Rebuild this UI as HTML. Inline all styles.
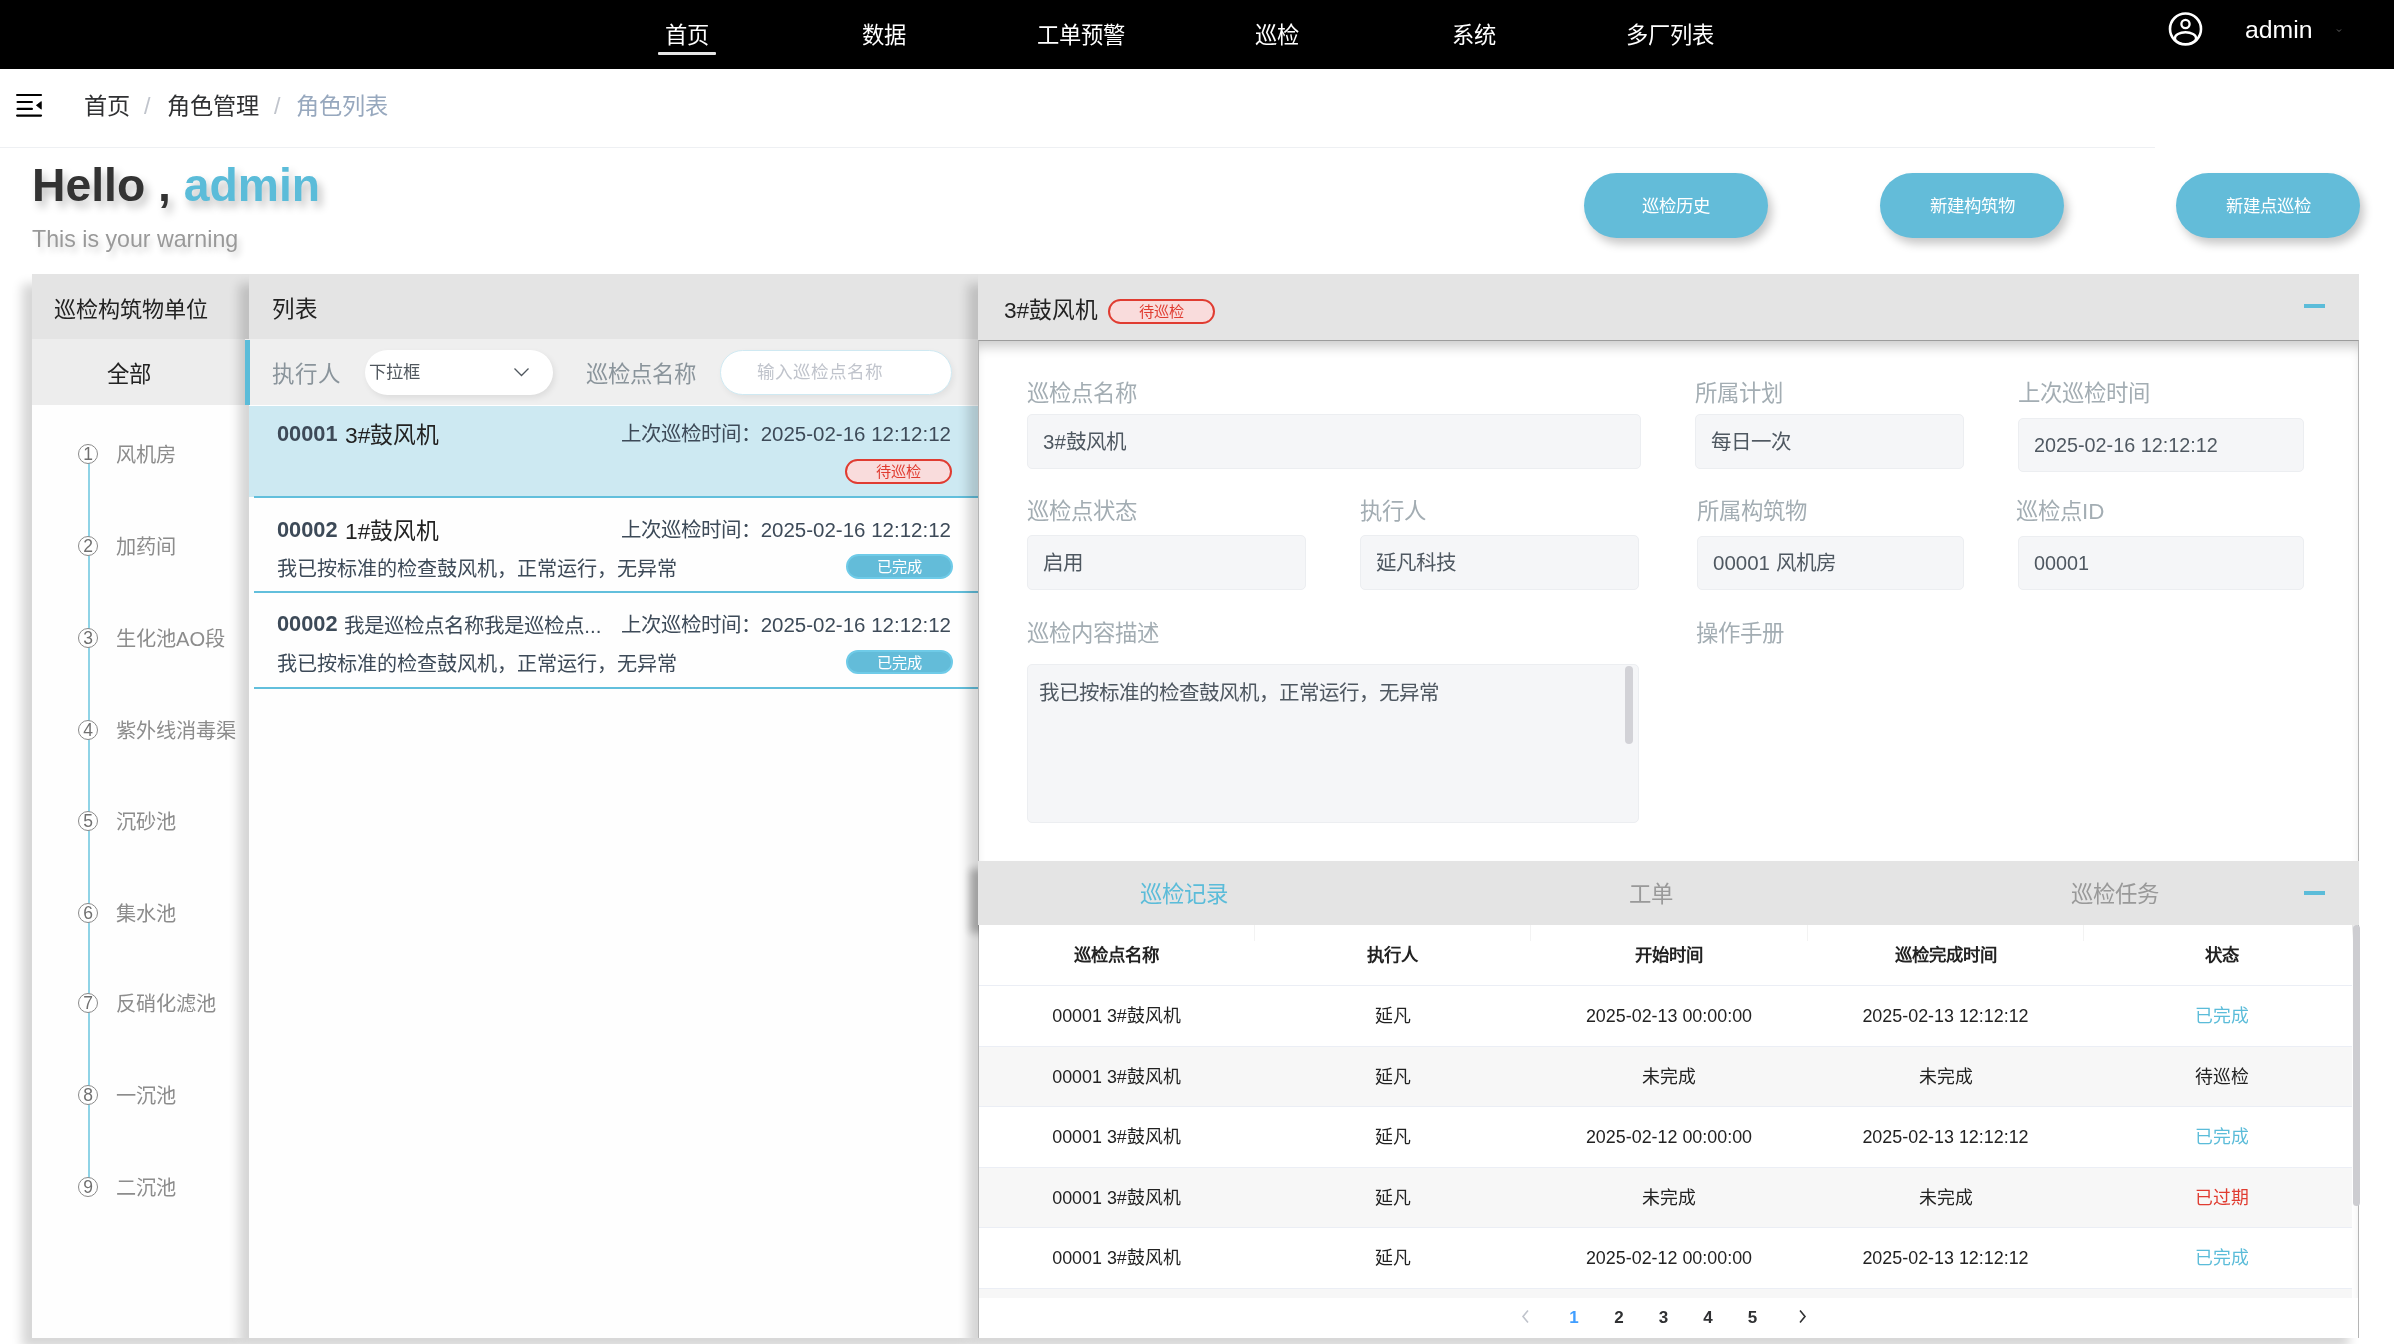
<!DOCTYPE html>
<html lang="zh-CN">
<head>
<meta charset="utf-8">
<style>
*{box-sizing:border-box;margin:0;padding:0}
html,body{width:2394px;height:1344px;overflow:hidden;background:#fff;font-family:"Liberation Sans",sans-serif;color:#303133}
.a{position:absolute;white-space:nowrap}
#nav{position:absolute;left:0;top:0;width:2394px;height:69px;background:#000}
.nv{position:absolute;top:18.5px;font-size:22.3px;line-height:34px;color:#fff;transform:translateX(-50%)}
#uline{position:absolute;left:658px;top:52px;width:58px;height:3px;background:#e6e6e6;border-radius:1px}
.bc{position:absolute;top:89px;font-size:23.2px;line-height:34px}
#sep{position:absolute;left:0;top:147px;width:2155px;height:1px;background:#eef0f3}
.hello{position:absolute;left:32px;top:152px;font-size:46.3px;line-height:66px;font-weight:bold;color:#333;text-shadow:4px 6px 8px rgba(0,0,0,.25)}
.warn{position:absolute;left:32px;top:223px;font-size:23.2px;line-height:32px;color:#999;text-shadow:3px 5px 6px rgba(0,0,0,.18)}
.btn{position:absolute;top:172.5px;width:184px;height:65.5px;border-radius:33px;background:#63bcd9;color:#fff;font-size:17.4px;line-height:67px;text-align:center;box-shadow:4px 6px 10px rgba(0,0,0,.22)}

.panel{position:absolute;top:274px;height:1064px;background:#fefefe;box-shadow:-10px 10px 10px rgba(0,0,0,.16)}
.in{position:absolute;top:-274px;width:0;height:0}
.circ{position:absolute;width:20px;height:20px;border:1px solid #8a8a8a;border-radius:50%;font-size:17.5px;line-height:19px;text-align:center;color:#707070;background:#fff;letter-spacing:0}
.badge{height:24.5px;width:107px;border-radius:13px;font-size:15.2px;line-height:21px;text-align:center}
.badge.red{background:#f9dcdc;border:2px solid #e03c31;color:#e03c31}
.badge.blue{background:#63bcd9;border:2px solid #6fcbe8;color:#fff}
.lab{font-size:22.4px;line-height:36px;color:#a3adb3}
.inp{background:#f5f6f8;border:1px solid #eceef1;border-radius:5px;font-size:20.5px;line-height:53px;padding-left:15px;color:#4f5861}
.tab{top:879px;font-size:22.4px;line-height:32px}
.th{top:942px;width:200px;text-align:center;font-size:17.4px;line-height:26px;font-weight:bold;color:#222}
.td{width:200px;text-align:center;font-size:17.9px;line-height:30px}
.pg{top:1304.5px;width:40px;text-align:center;font-size:17px;line-height:26px;font-weight:bold}

</style>
</head>
<body>
<div id="root" style="position:absolute;left:0;top:0;width:2394px;height:1344px;overflow:hidden;will-change:transform">
<div id="nav">
  <div class="nv" style="left:687px">首页</div>
  <div class="nv" style="left:884px">数据</div>
  <div class="nv" style="left:1081px">工单预警</div>
  <div class="nv" style="left:1277px">巡检</div>
  <div class="nv" style="left:1474px">系统</div>
  <div class="nv" style="left:1670px">多厂列表</div>
  <div id="uline"></div>
  <svg class="a" style="left:2167px;top:11px" width="37" height="37" viewBox="0 0 37 37">
    <defs><clipPath id="cc"><circle cx="18.5" cy="18" r="15.5"/></clipPath></defs>
    <circle cx="18.5" cy="18" r="15.5" fill="none" stroke="#fff" stroke-width="2.6"/>
    <circle cx="18.5" cy="13" r="4.1" fill="none" stroke="#fff" stroke-width="2.3"/>
    <ellipse cx="18.5" cy="27.2" rx="10.6" ry="6" fill="none" stroke="#fff" stroke-width="2.4" clip-path="url(#cc)"/>
  </svg>
  <div class="a" style="left:2245px;top:13px;font-size:24.8px;line-height:34px;color:#fff">admin</div>
  <svg class="a" style="left:2336px;top:28px" width="6" height="5" viewBox="0 0 6 5"><path d="M1 1.5 L3 3.5 L5 1.5" fill="none" stroke="#666" stroke-width="1"/></svg>
</div>

<!-- breadcrumb -->
<svg class="a" style="left:10px;top:85px" width="40" height="40" viewBox="0 0 40 40">
  <g stroke="#000" stroke-width="2.2" stroke-linecap="round" fill="none">
    <path d="M7.1 10 H31"/><path d="M7.6 17 H21.9"/><path d="M7.6 23.9 H21.9"/><path d="M7.1 30.6 H31"/>
  </g>
  <path d="M31.3 16.6 L31.3 24.2 L26.4 20.3 Z" fill="#000" stroke="#000" stroke-width="0.8" stroke-linejoin="round"/>
</svg>
<div class="bc" style="left:84px;color:#303133">首页</div>
<div class="bc" style="left:144px;color:#c0c4cc">/</div>
<div class="bc" style="left:167px;color:#303133">角色管理</div>
<div class="bc" style="left:274px;color:#c0c4cc">/</div>
<div class="bc" style="left:296px;color:#97a8be">角色列表</div>
<div id="sep"></div>

<div class="hello">Hello , <span style="color:#5bbcd9">admin</span></div>
<div class="warn">This is your warning</div>

<div class="btn" style="left:1584px">巡检历史</div>
<div class="btn" style="left:1880px">新建构筑物</div>
<div class="btn" style="left:2176px">新建点巡检</div>


<!-- LEFT PANEL -->
<div class="panel" id="pl" style="left:32px;width:217px;z-index:1">
 <div class="in" style="left:-32px">
  <div class="a" style="left:32px;top:274px;width:217px;height:65px;background:#e4e4e4"></div>
  <div class="a" style="left:54px;top:293px;font-size:22.1px;line-height:34px;color:#222">巡检构筑物单位</div>
  <div class="a" style="left:32px;top:339px;width:217px;height:66px;background:#ededed"></div>
  <div class="a" style="left:107px;top:358px;font-size:22.4px;line-height:34px;color:#222">全部</div>
  <div class="a" style="left:88px;top:463px;width:2px;height:733px;background:#8fd3e6"></div>
    <div class="circ" style="left:78px;top:443.7px">1</div>
  <div class="a" style="left:116px;top:440.7px;font-size:20.2px;line-height:28px;color:#8c8c8c">风机房</div>
  <div class="circ" style="left:78px;top:535.9px">2</div>
  <div class="a" style="left:116px;top:532.9px;font-size:20.2px;line-height:28px;color:#8c8c8c">加药间</div>
  <div class="circ" style="left:78px;top:627.9px">3</div>
  <div class="a" style="left:116px;top:624.9px;font-size:20.2px;line-height:28px;color:#8c8c8c">生化池AO段</div>
  <div class="circ" style="left:78px;top:719.5px">4</div>
  <div class="a" style="left:116px;top:716.5px;font-size:20.2px;line-height:28px;color:#8c8c8c">紫外线消毒渠</div>
  <div class="circ" style="left:78px;top:810.5px">5</div>
  <div class="a" style="left:116px;top:807.5px;font-size:20.2px;line-height:28px;color:#8c8c8c">沉砂池</div>
  <div class="circ" style="left:78px;top:902.5px">6</div>
  <div class="a" style="left:116px;top:899.5px;font-size:20.2px;line-height:28px;color:#8c8c8c">集水池</div>
  <div class="circ" style="left:78px;top:992.5px">7</div>
  <div class="a" style="left:116px;top:989.5px;font-size:20.2px;line-height:28px;color:#8c8c8c">反硝化滤池</div>
  <div class="circ" style="left:78px;top:1084.5px">8</div>
  <div class="a" style="left:116px;top:1081.5px;font-size:20.2px;line-height:28px;color:#8c8c8c">一沉池</div>
  <div class="circ" style="left:78px;top:1176.5px">9</div>
  <div class="a" style="left:116px;top:1173.5px;font-size:20.2px;line-height:28px;color:#8c8c8c">二沉池</div>

 </div>
</div>

<!-- MIDDLE PANEL -->
<div class="panel" id="pm" style="left:249px;width:729px;z-index:2">
 <div class="in" style="left:-249px">
  <div class="a" style="left:249px;top:274px;width:729px;height:65px;background:#e4e4e4"></div>
  <div class="a" style="left:272px;top:293px;font-size:22.5px;line-height:34px;color:#222">列表</div>
  <div class="a" style="left:245px;top:339px;width:733px;height:66px;background:#efefef"></div>
  <div class="a" style="left:245px;top:340px;width:5px;height:65px;background:#5bbcd9"></div>
  <div class="a" style="left:272px;top:358px;font-size:22.5px;line-height:34px;color:#8a949b">执行人</div>
  <div class="a" style="left:365px;top:350px;width:188px;height:45px;border-radius:23px;background:#fff;box-shadow:2px 3px 6px rgba(0,0,0,.08)"></div>
  <div class="a" style="left:369px;top:359px;font-size:17.3px;line-height:26px;color:#50575e">下拉框</div>
  <svg class="a" style="left:513px;top:367px" width="17" height="11" viewBox="0 0 17 11"><path d="M1.5 1.5 L8.5 8.5 L15.5 1.5" fill="none" stroke="#50575e" stroke-width="1.3"/></svg>
  <div class="a" style="left:586px;top:358px;font-size:22.4px;line-height:34px;color:#8a949b">巡检点名称</div>
  <div class="a" style="left:720px;top:350px;width:232px;height:45px;border-radius:23px;background:#fff;border:1px solid #cfe9f2;box-shadow:2px 3px 6px rgba(0,0,0,.06)"></div>
  <div class="a" style="left:757px;top:359px;font-size:17.6px;line-height:26px;color:#c0c4cc">输入巡检点名称</div>

  <div class="a" style="left:249px;top:405px;width:729px;height:92px;background:#cde9f2;border-top:1px solid #fff"></div>
  <div class="a" style="left:254px;top:496px;width:724px;height:1.6px;background:#62bfdc"></div>
  <div class="a" style="left:254px;top:591px;width:724px;height:1.6px;background:#62bfdc"></div>
  <div class="a" style="left:254px;top:687px;width:724px;height:1.6px;background:#62bfdc"></div>

  
  <div class="a" style="left:277px;top:420px;font-size:22.8px;line-height:30px;color:#222"><b style="color:#3d4a58;font-size:21.8px;margin-right:1px;position:relative;top:-2px">00001</b> 3#鼓风机</div>
  <div class="a" style="left:620px;top:419.5px;font-size:20.5px;line-height:28px;color:#3d4a58;width:331px;text-align:right">上次巡检时间：2025-02-16 12:12:12</div>
  <div class="a badge red" style="left:845px;top:459px">待巡检</div>

  <div class="a" style="left:277px;top:516px;font-size:22.8px;line-height:30px;color:#222"><b style="color:#3d4a58;font-size:21.8px;margin-right:1px;position:relative;top:-2px">00002</b> 1#鼓风机</div>
  <div class="a" style="left:620px;top:515.5px;font-size:20.5px;line-height:28px;color:#3d4a58;width:331px;text-align:right">上次巡检时间：2025-02-16 12:12:12</div>
  <div class="a" style="left:277px;top:554.5px;font-size:20.1px;line-height:28px;color:#3d4a58">我已按标准的检查鼓风机，正常运行，无异常</div>
  <div class="a badge blue" style="left:846px;top:554px">已完成</div>

  <div class="a" style="left:277px;top:611px;font-size:20.5px;line-height:30px;color:#3d4a58"><b style="font-size:21.8px;margin-right:1px;position:relative;top:-2px">00002</b> 我是巡检点名称我是巡检点...</div>
  <div class="a" style="left:620px;top:610.5px;font-size:20.5px;line-height:28px;color:#3d4a58;width:331px;text-align:right">上次巡检时间：2025-02-16 12:12:12</div>
  <div class="a" style="left:277px;top:649.5px;font-size:20.1px;line-height:28px;color:#3d4a58">我已按标准的检查鼓风机，正常运行，无异常</div>
  <div class="a badge blue" style="left:846px;top:649.5px">已完成</div>

 </div>
</div>

<!-- RIGHT PANEL -->
<div class="panel" id="pr" style="left:978px;width:1381px;z-index:3">
 <div class="in" style="left:-978px">
  <div class="a" style="left:978px;top:274px;width:1381px;height:66px;background:#e4e4e4"></div>
  <div class="a" style="left:978px;top:340px;width:1381px;height:997.5px;background:#fff;border-left:1px solid #b5b5b5;border-right:1px solid #b5b5b5;border-bottom:1px solid #b8b8b8;border-top:1.5px solid #9c9c9c;box-shadow:inset 0 11px 12px -5px rgba(0,0,0,.2)"></div>
  <div class="a" style="left:1004px;top:293px;font-size:22.7px;line-height:34px;color:#222">3#鼓风机</div>
  <div class="a badge red" style="left:1108px;top:299px">待巡检</div>
  <div class="a" style="left:2304px;top:304px;width:21px;height:4px;background:#5bbcd9"></div>
    <div class="a lab" style="left:1027px;top:376px">巡检点名称</div>
  <div class="a inp" style="left:1027px;top:414px;width:614px;height:55px">3#鼓风机</div>
  <div class="a lab" style="left:1695px;top:376px">所属计划</div>
  <div class="a inp" style="left:1695px;top:414px;width:269px;height:55px">每日一次</div>
  <div class="a lab" style="left:2018px;top:376px">上次巡检时间</div>
  <div class="a inp" style="left:2018px;top:418px;width:286px;height:54px;font-size:19.8px;line-height:52px">2025-02-16 12:12:12</div>
  <div class="a lab" style="left:1027px;top:494px">巡检点状态</div>
  <div class="a inp" style="left:1027px;top:535px;width:279px;height:55px">启用</div>
  <div class="a lab" style="left:1360px;top:494px">执行人</div>
  <div class="a inp" style="left:1360px;top:535px;width:279px;height:55px">延凡科技</div>
  <div class="a lab" style="left:1697px;top:494px">所属构筑物</div>
  <div class="a inp" style="left:1697px;top:536px;width:267px;height:54px;line-height:52px">00001 风机房</div>
  <div class="a lab" style="left:2016px;top:494px">巡检点ID</div>
  <div class="a inp" style="left:2018px;top:536px;width:286px;height:54px;font-size:19.8px;line-height:52px">00001</div>
  <div class="a lab" style="left:1027px;top:616px">巡检内容描述</div>
  <div class="a lab" style="left:1696px;top:616px">操作手册</div>
  <div class="a inp" style="left:1027px;top:664px;width:612px;height:159px;line-height:56px;padding-left:11px">我已按标准的检查鼓风机，正常运行，无异常</div>
  <div class="a" style="left:1625px;top:666px;width:8px;height:78px;border-radius:4px;background:#d2d2d7"></div>

  
  <div class="a" style="left:978px;top:861px;width:1381px;height:64px;background:#e4e4e4;box-shadow:-8px 8px 8px rgba(0,0,0,.26)"></div>
  <div class="a tab" style="left:1140px;color:#5bbcd9">巡检记录</div>
  <div class="a tab" style="left:1629px;color:#999">工单</div>
  <div class="a tab" style="left:2071px;color:#999">巡检任务</div>
  <div class="a" style="left:2304px;top:891px;width:21px;height:4px;background:#5bbcd9"></div>
  <div class="a" style="left:979px;top:925px;width:1373px;height:373px;background:#fff"></div>
  <div class="a th" style="left:1016.5px">巡检点名称</div>
  <div class="a th" style="left:1292.5px">执行人</div>
  <div class="a th" style="left:1569px">开始时间</div>
  <div class="a th" style="left:1845.5px">巡检完成时间</div>
  <div class="a th" style="left:2121.5px">状态</div>
  <div class="a" style="left:1254px;top:925px;width:1px;height:16px;background:#f3f3f3"></div>
  <div class="a" style="left:1530px;top:925px;width:1px;height:16px;background:#f3f3f3"></div>
  <div class="a" style="left:1807px;top:925px;width:1px;height:16px;background:#f3f3f3"></div>
  <div class="a" style="left:2083px;top:925px;width:1px;height:16px;background:#f3f3f3"></div>
  <div class="a" style="left:979px;top:985.3px;width:1373px;height:60.45px;background:#fff;border-top:1px solid #ebeef5"></div>
  <div class="a td" style="left:1016.5px;top:1001.3px;color:#222">00001 3#鼓风机</div>
  <div class="a td" style="left:1292.5px;top:1001.3px;color:#222">延凡</div>
  <div class="a td" style="left:1569px;top:1001.3px;color:#222">2025-02-13 00:00:00</div>
  <div class="a td" style="left:1845.5px;top:1001.3px;color:#222">2025-02-13 12:12:12</div>
  <div class="a td" style="left:2121.5px;top:1001.3px;color:#5bbcd9">已完成</div>
  <div class="a" style="left:979px;top:1045.8px;width:1373px;height:60.45px;background:#f7f7f7;border-top:1px solid #ebeef5"></div>
  <div class="a td" style="left:1016.5px;top:1061.8px;color:#222">00001 3#鼓风机</div>
  <div class="a td" style="left:1292.5px;top:1061.8px;color:#222">延凡</div>
  <div class="a td" style="left:1569px;top:1061.8px;color:#222">未完成</div>
  <div class="a td" style="left:1845.5px;top:1061.8px;color:#222">未完成</div>
  <div class="a td" style="left:2121.5px;top:1061.8px;color:#222">待巡检</div>
  <div class="a" style="left:979px;top:1106.2px;width:1373px;height:60.45px;background:#fff;border-top:1px solid #ebeef5"></div>
  <div class="a td" style="left:1016.5px;top:1122.2px;color:#222">00001 3#鼓风机</div>
  <div class="a td" style="left:1292.5px;top:1122.2px;color:#222">延凡</div>
  <div class="a td" style="left:1569px;top:1122.2px;color:#222">2025-02-12 00:00:00</div>
  <div class="a td" style="left:1845.5px;top:1122.2px;color:#222">2025-02-13 12:12:12</div>
  <div class="a td" style="left:2121.5px;top:1122.2px;color:#5bbcd9">已完成</div>
  <div class="a" style="left:979px;top:1166.7px;width:1373px;height:60.45px;background:#f7f7f7;border-top:1px solid #ebeef5"></div>
  <div class="a td" style="left:1016.5px;top:1182.7px;color:#222">00001 3#鼓风机</div>
  <div class="a td" style="left:1292.5px;top:1182.7px;color:#222">延凡</div>
  <div class="a td" style="left:1569px;top:1182.7px;color:#222">未完成</div>
  <div class="a td" style="left:1845.5px;top:1182.7px;color:#222">未完成</div>
  <div class="a td" style="left:2121.5px;top:1182.7px;color:#e03c31">已过期</div>
  <div class="a" style="left:979px;top:1227.1px;width:1373px;height:60.45px;background:#fff;border-top:1px solid #ebeef5"></div>
  <div class="a td" style="left:1016.5px;top:1243.1px;color:#222">00001 3#鼓风机</div>
  <div class="a td" style="left:1292.5px;top:1243.1px;color:#222">延凡</div>
  <div class="a td" style="left:1569px;top:1243.1px;color:#222">2025-02-12 00:00:00</div>
  <div class="a td" style="left:1845.5px;top:1243.1px;color:#222">2025-02-13 12:12:12</div>
  <div class="a td" style="left:2121.5px;top:1243.1px;color:#5bbcd9">已完成</div>
  <div class="a" style="left:979px;top:1287.5px;width:1373px;height:10.5px;background:#f7f7f7;border-top:1px solid #ebeef5"></div>
  <div class="a" style="left:979px;top:1298px;width:1379px;height:40px;background:#fff"></div>
  <div class="a" style="left:2352.5px;top:925px;width:7px;height:281px;border-radius:3.5px;background:#cdcdd1"></div>
  <svg class="a" style="left:1521px;top:1308.5px" width="9" height="15" viewBox="0 0 9 15"><path d="M7 1.5 L2 7.5 L7 13.5" fill="none" stroke="#c0c4cc" stroke-width="1.6"/></svg>
  <svg class="a" style="left:1797.5px;top:1309px" width="9" height="15" viewBox="0 0 9 15"><path d="M2 1.5 L7 7.5 L2 13.5" fill="none" stroke="#303133" stroke-width="1.6"/></svg>
  <div class="a pg" style="left:1554px;color:#409eff">1</div>
  <div class="a pg" style="left:1599px;color:#303133">2</div>
  <div class="a pg" style="left:1643.5px;color:#303133">3</div>
  <div class="a pg" style="left:1688px;color:#303133">4</div>
  <div class="a pg" style="left:1732.5px;color:#303133">5</div>

 </div>
</div>
</div>
</body>
</html>
